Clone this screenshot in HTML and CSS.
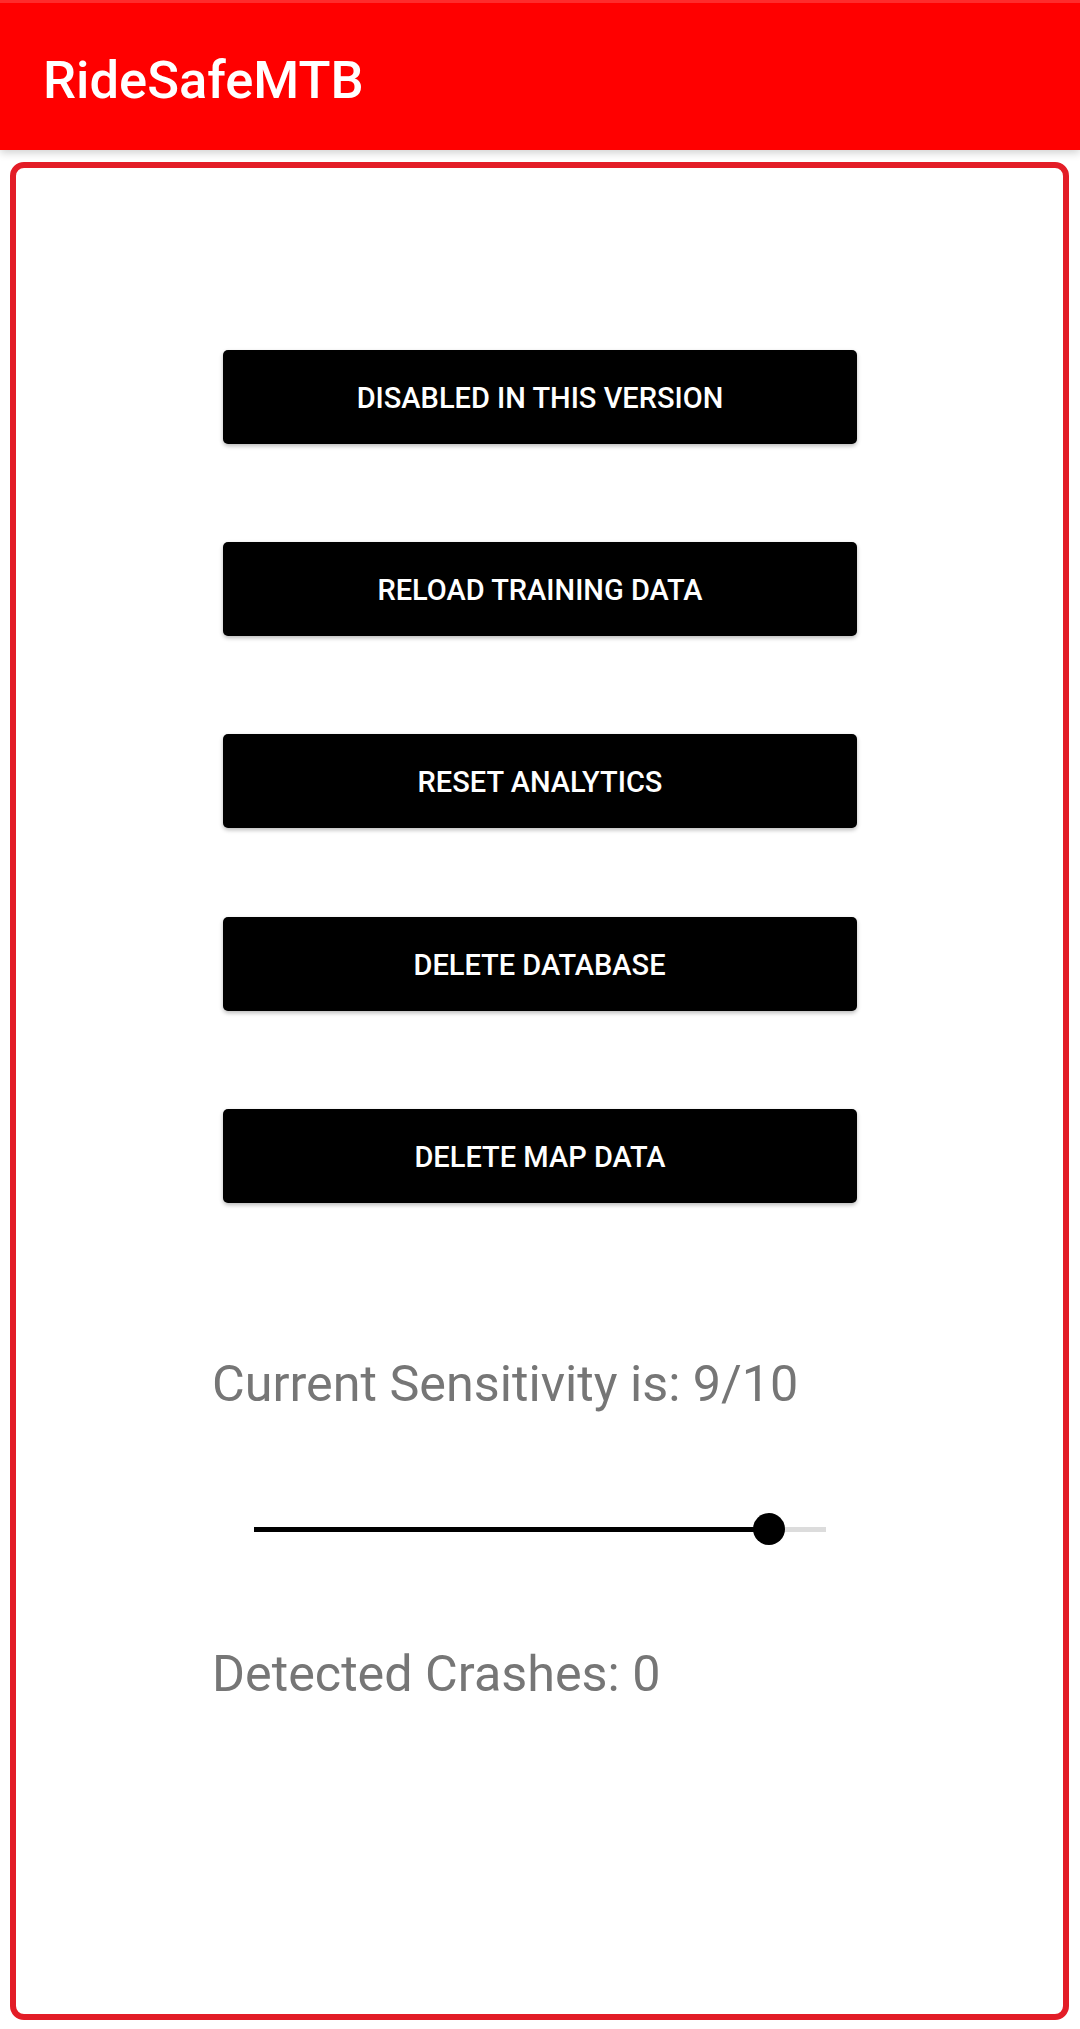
FILE: index.html
```html
<!DOCTYPE html>
<html lang="en">

<head>
  <meta charset="UTF-8" />
  <meta name="viewport" content="width=device-width, initial-scale=1.0" />
  <title>RideSafeMTB</title>
  <link rel="stylesheet" href="styles.css">
</head>

<body>
  <header class="app-bar">
    <h1 class="title">RideSafeMTB</h1>
  </header>

  <main class="panel">
    <div class="actions">
      <button type="button" class="action">Disabled in this version</button>
      <button type="button" class="action">Reload training data</button>
      <button type="button" class="action">Reset analytics</button>
      <button type="button" class="action action-db">Delete database</button>
      <button type="button" class="action">Delete map data</button>
    </div>

    <p class="label sensitivity">Current Sensitivity is: 9/10</p>

    <div class="slider">
      <div class="track">
        <div class="track-fill" style="width: 90%;"></div>
      </div>
      <span class="thumb" style="left: 90%;"></span>
    </div>

    <p class="label crashes">Detected Crashes: 0</p>
  </main>
</body>

</html>
```

FILE: styles.css
```css
* {
  box-sizing: border-box;
}

body {
  margin: 0;
  width: 1080px;
  height: 2029px;
  background: #fff;
  font-family: Roboto, "Noto Sans", sans-serif;
  overflow: hidden;
}

.app-bar {
  height: 150px;
  background: #ff0000;
  border-top: 3px solid #ff2b2b;
  display: flex;
  align-items: center;
  padding: 0 0 0 43px;
  box-shadow: 0 3px 8px rgba(0, 0, 0, 0.18);
}

.title {
  margin: 8px 0 0;
  color: #fff;
  font-size: 52.5px;
  font-weight: 500;
  line-height: 1;
}

.panel {
  margin: 12px 0 0 10px;
  width: 1059px;
  height: 1858px;
  border: 6px solid #e31d27;
  border-radius: 14px;
  padding-top: 182px;
}

.actions {
  display: flex;
  flex-direction: column;
  align-items: center;
  gap: 98px;
}

.action {
  width: 634px;
  height: 94px;
  margin: 0 0 0 1px;
  padding-top: 2px;
  border: none;
  border-radius: 5px;
  background: #000;
  color: #fff;
  font-family: Roboto, "Noto Sans", sans-serif;
  font-size: 29px;
  font-weight: 500;
  letter-spacing: 0;
  text-transform: uppercase;
  box-shadow: 0 2px 4px rgba(0, 0, 0, 0.28);
  cursor: pointer;
}

.action-db {
  margin-top: -9px;
  margin-left: 0;
}

.label {
  margin: 0;
  padding-left: 196px;
  color: #767676;
  font-size: 50.3px;
  line-height: 58px;
}

.sensitivity {
  margin-top: 152px;
}

.slider {
  position: relative;
  width: 572px;
  height: 32px;
  margin: 100px 0 0 238px;
  display: flex;
  align-items: center;
}

.track {
  width: 100%;
  height: 5px;
  background: #dcdcdc;
}

.track-fill {
  height: 100%;
  background: #000;
}

.thumb {
  position: absolute;
  top: 0;
  width: 32px;
  height: 32px;
  margin-left: -16px;
  border-radius: 50%;
  background: #000;
}

.crashes {
  margin-top: 100px;
}
```
